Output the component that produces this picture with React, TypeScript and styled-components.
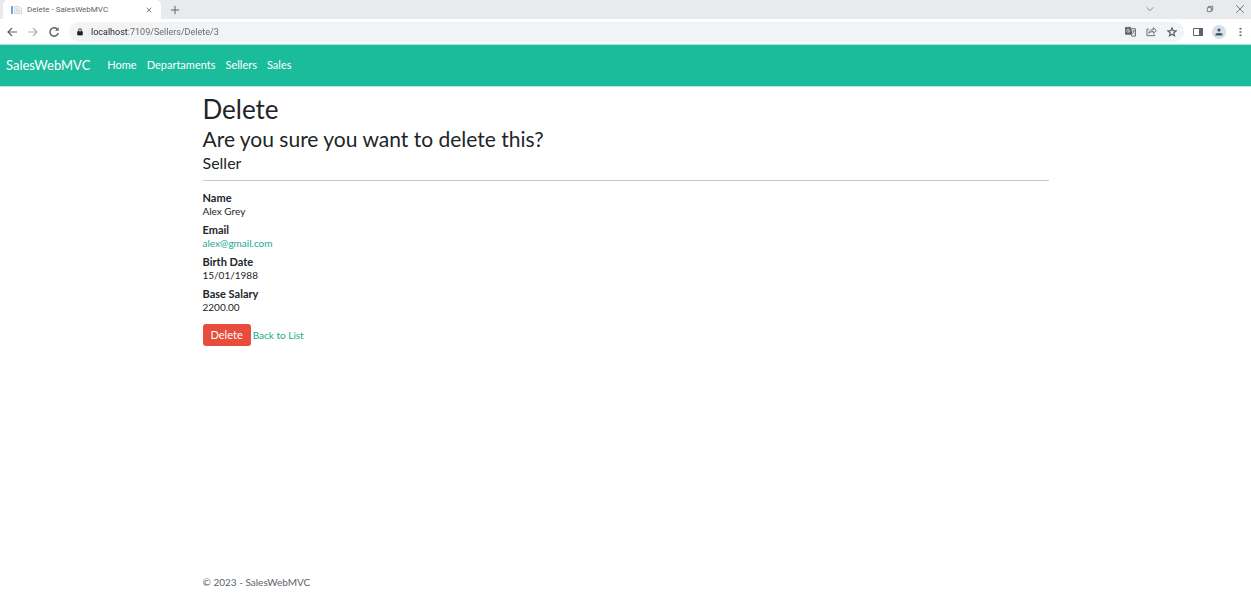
import React from "react";
import styled, { createGlobalStyle } from "styled-components";

const GlobalStyle = createGlobalStyle`
  *, *::before, *::after { box-sizing: border-box; }
  body {
    margin: 0;
    background: #fff;
    color: #212529;
    font: 10px/13px Lato, "Liberation Sans", sans-serif;
  }
`;

const Page = styled.div`
  display: flex;
  flex-direction: column;
  min-height: 100vh;
`;

/* Browser window */
const TabStrip = styled.div`
  display: flex;
  align-items: center;
  height: 19px;
  padding-left: 3px;
  background: #e8eaed;
  font-family: Roboto, sans-serif;
`;

const Tab = styled.div`
  display: flex;
  align-items: center;
  gap: 5px;
  width: 158px;
  height: 19px;
  padding: 0 6px 0 8px;
  border-radius: 5px 5px 0 0;
  background: #fff;
  color: #5f6368;
  font-size: 8px;
`;

const TabTitle = styled.span`
  flex: 1;
  white-space: nowrap;
`;

const IconButton = styled.button<{ $w?: number; $color?: string }>`
  display: flex;
  align-items: center;
  justify-content: center;
  flex: none;
  width: ${(p) => p.$w ?? 12}px;
  height: 14px;
  padding: 0;
  border: 0;
  background: none;
  color: ${(p) => p.$color ?? "#5f6368"};
`;

const NewTab = styled(IconButton)`
  margin-left: 8px;
`;

const WindowControls = styled.div`
  display: flex;
  align-items: center;
  margin-left: auto;
  padding: 0 5px 2px 0;
`;

const RestoreButton = styled(IconButton)`
  margin: 0 18px 0 48px;
`;

const Toolbar = styled.div`
  display: flex;
  align-items: center;
  height: 25px;
  padding: 0 4px 0 6px;
  background: #fff;
`;

const History = styled.div`
  display: flex;
  gap: 9px;
  margin-right: 9px;
`;

const AddressBar = styled.div`
  display: flex;
  align-items: center;
  flex: 1;
  gap: 7px;
  height: 20px;
  padding: 0 5px 0 7px;
  border-radius: 10px;
  background: #f1f3f4;
`;

/* The host part of the address is darker than its path. */
const AddressInput = styled.input`
  flex: 1;
  min-width: 0;
  height: 14px;
  padding: 0;
  border: 0;
  outline: 0;
  background: linear-gradient(to right, #202124 37px, #5f6368 37px);
  background-clip: text;
  -webkit-background-clip: text;
  -webkit-text-fill-color: transparent;
  color: #5f6368;
  font: 9px/14px Roboto, sans-serif;
`;

const AddressActions = styled.div`
  display: flex;
  gap: 9px;
  margin-right: 1px;
`;

const BrowserActions = styled.div`
  display: flex;
  align-items: center;
  gap: 7px;
  margin-left: 7px;
`;

const Avatar = styled(IconButton)`
  border-radius: 7px;
  background: #d8dfe6;
`;

/* Application */
const NavBar = styled.nav`
  display: flex;
  align-items: center;
  gap: 10px;
  height: 43px;
  padding: 0 6px 2px;
  border-top: 1px solid #a9e5d9;
  border-bottom: 1px solid #b5e9df;
  background: #1abc9c;
`;

const Brand = styled.a`
  margin-right: 7px;
  color: #fff;
  font-size: 13px;
  line-height: 18px;
  text-decoration: none;
`;

const NavLink = styled.a`
  color: #fff;
  font-size: 11px;
  line-height: 14px;
  text-decoration: none;
`;

const Container = styled.div`
  width: calc(100% - 32px);
  max-width: 846px;
  margin: 0 auto;
`;

const Main = styled.main`
  flex: 1;
  padding-top: 6px;
`;

const Title = styled.h1`
  margin: 0;
  font-size: 26px;
  font-weight: 400;
  line-height: 32px;
`;

const Question = styled.h2`
  margin: 0;
  font-size: 21px;
  font-weight: 400;
  line-height: 28px;
`;

const Subject = styled.h3`
  margin: 0;
  font-size: 16px;
  font-weight: 400;
  line-height: 20px;
`;

const Divider = styled.hr`
  margin: 7px 0 10px;
  border: 0;
  border-top: 1px solid #c7c8c9;
`;

const Details = styled.dl`
  margin: 0 0 10px;
`;

const Term = styled.dt`
  font-size: 11px;
  font-weight: 700;
  line-height: 14px;
`;

const Value = styled.dd`
  margin: 0 0 5px;
`;

const Link = styled.a`
  color: #18a98c;
  text-decoration: none;
`;

const Actions = styled.form`
  display: flex;
  align-items: center;
  gap: 2px;
`;

const DeleteButton = styled.button`
  height: 22px;
  padding: 0 8px;
  border: 0;
  border-radius: 3px;
  background: #e74c3c;
  color: #fff;
  font: 11px/14px Lato, "Liberation Sans", sans-serif;
`;

const Footer = styled.footer`
  padding-bottom: 7px;
  color: #5c636a;
`;

const Icon = ({ size = 10, children, w = 1.2 }: {
  size?: number; children: React.ReactNode; w?: number;
}) => (
  <svg width={size} height={size} viewBox="0 0 12 12" fill="none" stroke="currentColor" strokeWidth={w} aria-hidden="true">
    {children}
  </svg>
);

const links = ["Home", "Departaments", "Sellers", "Sales"];

const seller = [
  { label: "Name", value: "Alex Grey" },
  { label: "Email", value: "alex@gmail.com", mail: true },
  { label: "Birth Date", value: "15/01/1988" },
  { label: "Base Salary", value: "2200.00" },
];

export default function App() {
  return (
    <>
      <GlobalStyle />
      <Page>
        <TabStrip>
          <Tab>
            <svg width="11" height="10" viewBox="0 0 11 10" aria-hidden="true">
              <path d="M0 1h2v8H0z" fill="#6fa8d6" />
              <path d="M3.5 1.5h4l3 2v5h-7z" fill="#eef1f3" stroke="#cbd2d8" strokeWidth=".8" />
              <path d="M5 4h2M5 6h4" stroke="#c1cad2" strokeWidth=".8" />
            </svg>
            <TabTitle>Delete - SalesWebMVC</TabTitle>
            <IconButton aria-label="Close tab"><Icon size={8}><path d="M2.500 2.500l7 7M9.500 2.500l-7 7" /></Icon></IconButton>
          </Tab>
          <NewTab aria-label="New tab"><Icon><path d="M6 1v10M1 6h10" /></Icon></NewTab>
          <WindowControls>
            <IconButton aria-label="Search tabs" $color="#8a8d91"><Icon><path d="M2 4l4 4 4-4" /></Icon></IconButton>
            <RestoreButton aria-label="Restore"><Icon size={8}><path d="M2 4h6v6H2zM4 4V2h6v6H8" /></Icon></RestoreButton>
            <IconButton aria-label="Close"><Icon w={1}><path d="M1.500 1.500l9 9M10.500 1.500l-9 9" /></Icon></IconButton>
          </WindowControls>
        </TabStrip>
        <Toolbar>
          <History>
            <IconButton aria-label="Back"><Icon size={12}><path d="M11 6H2M6 2L2 6l4 4" /></Icon></IconButton>
            <IconButton aria-label="Forward" $color="#b0b3b6"><Icon size={12}><path d="M1 6h9M6 2l4 4-4 4" /></Icon></IconButton>
            <IconButton aria-label="Reload">
              <Icon size={12} w={1.5}><path d="M9.600 3.600A4.200 4.200 0 1 0 10.200 7" /><path d="M10.700 1.200v3.600H7z" fill="currentColor" stroke="none" /></Icon>
            </IconButton>
          </History>
          <AddressBar>
            <Icon size={8}><path d="M2.500 5.500h7v5h-7z" fill="currentColor" /><path d="M4 5V3a2 2 0 0 1 4 0v2" /></Icon>
            <AddressInput aria-label="Address" defaultValue="localhost:7109/Sellers/Delete/3" />
            <AddressActions>
              <IconButton aria-label="Translate">
                <Icon size={11} w={1}>
                  <path d="M.5 1.500h5.500l1.500 7.500h-7z" fill="#5f6368" />
                  <path d="M6.500 3h5v8H7.500l-.8-2" />
                  <path d="M8 5.500h3M9.500 4.500v1c0 1.500-.8 2.500-2 3M8.500 6.500l2 2" stroke="#777b80" />
                  <path d="M5 5.200A1.600 1.600 0 1 1 4.500 4M3.500 5.300H5" stroke="#f1f3f4" strokeWidth=".8" />
                </Icon>
              </IconButton>
              <IconButton aria-label="Share">
                <Icon size={11} w={1}><path d="M3 3.500H1v7h8.500V9M3 8c.5-3 2.200-4 5-4V1.800L11.300 5 8 8V6C6 6 4.500 6.500 3 8z" /></Icon>
              </IconButton>
              <IconButton aria-label="Bookmark">
                <Icon w={1.5}><path d="M6 1.200l1.400 3.200 3.500.3-2.700 2.300.8 3.500L6 8.700l-3 1.800.8-3.500L1.100 4.700l3.500-.3z" /></Icon>
              </IconButton>
            </AddressActions>
          </AddressBar>
          <BrowserActions>
            <IconButton aria-label="Side panel" $w={14}>
              <svg width="10" height="8" viewBox="0 0 10 8" aria-hidden="true"><path d="M.5.5h9v7h-9z" fill="none" stroke="currentColor" /><path d="M6 0h4v8H6z" fill="currentColor" /></svg>
            </IconButton>
            <Avatar aria-label="Profile" $w={14} $color="#46566b">
              <svg width="8" height="8" viewBox="0 0 8 8" aria-hidden="true"><circle cx="4" cy="2" r="1.600" fill="currentColor" /><path d="M.5 7.500V6C.5 4.500 7.500 4.500 7.500 6v1.500z" fill="currentColor" /></svg>
            </Avatar>
            <IconButton aria-label="Menu" $w={14}>
              <svg width="3" height="10" viewBox="0 0 3 10" aria-hidden="true"><path d="M.5 1h2v1.500h-2zM.5 4.300h2v1.500h-2zM.5 7.600h2v1.500h-2z" fill="currentColor" /></svg>
            </IconButton>
          </BrowserActions>
        </Toolbar>
        <NavBar>
          <Brand href="#">SalesWebMVC</Brand>
          {links.map((l) => <NavLink key={l} href="#">{l}</NavLink>)}
        </NavBar>
        <Main>
          <Container>
            <Title>Delete</Title>
            <Question>Are you sure you want to delete this?</Question>
            <Subject>Seller</Subject>
            <Divider />
            <Details>
              {seller.map((f) => (
                <React.Fragment key={f.label}>
                  <Term>{f.label}</Term>
                  <Value>{f.mail ? <Link href={`mailto:${f.value}`}>{f.value}</Link> : f.value}</Value>
                </React.Fragment>
              ))}
            </Details>
            <Actions>
              <DeleteButton type="button">Delete</DeleteButton>
              <Link href="#">Back to List</Link>
            </Actions>
          </Container>
        </Main>
        <Footer>
          <Container>© 2023 - SalesWebMVC</Container>
        </Footer>
      </Page>
    </>
  );
}
